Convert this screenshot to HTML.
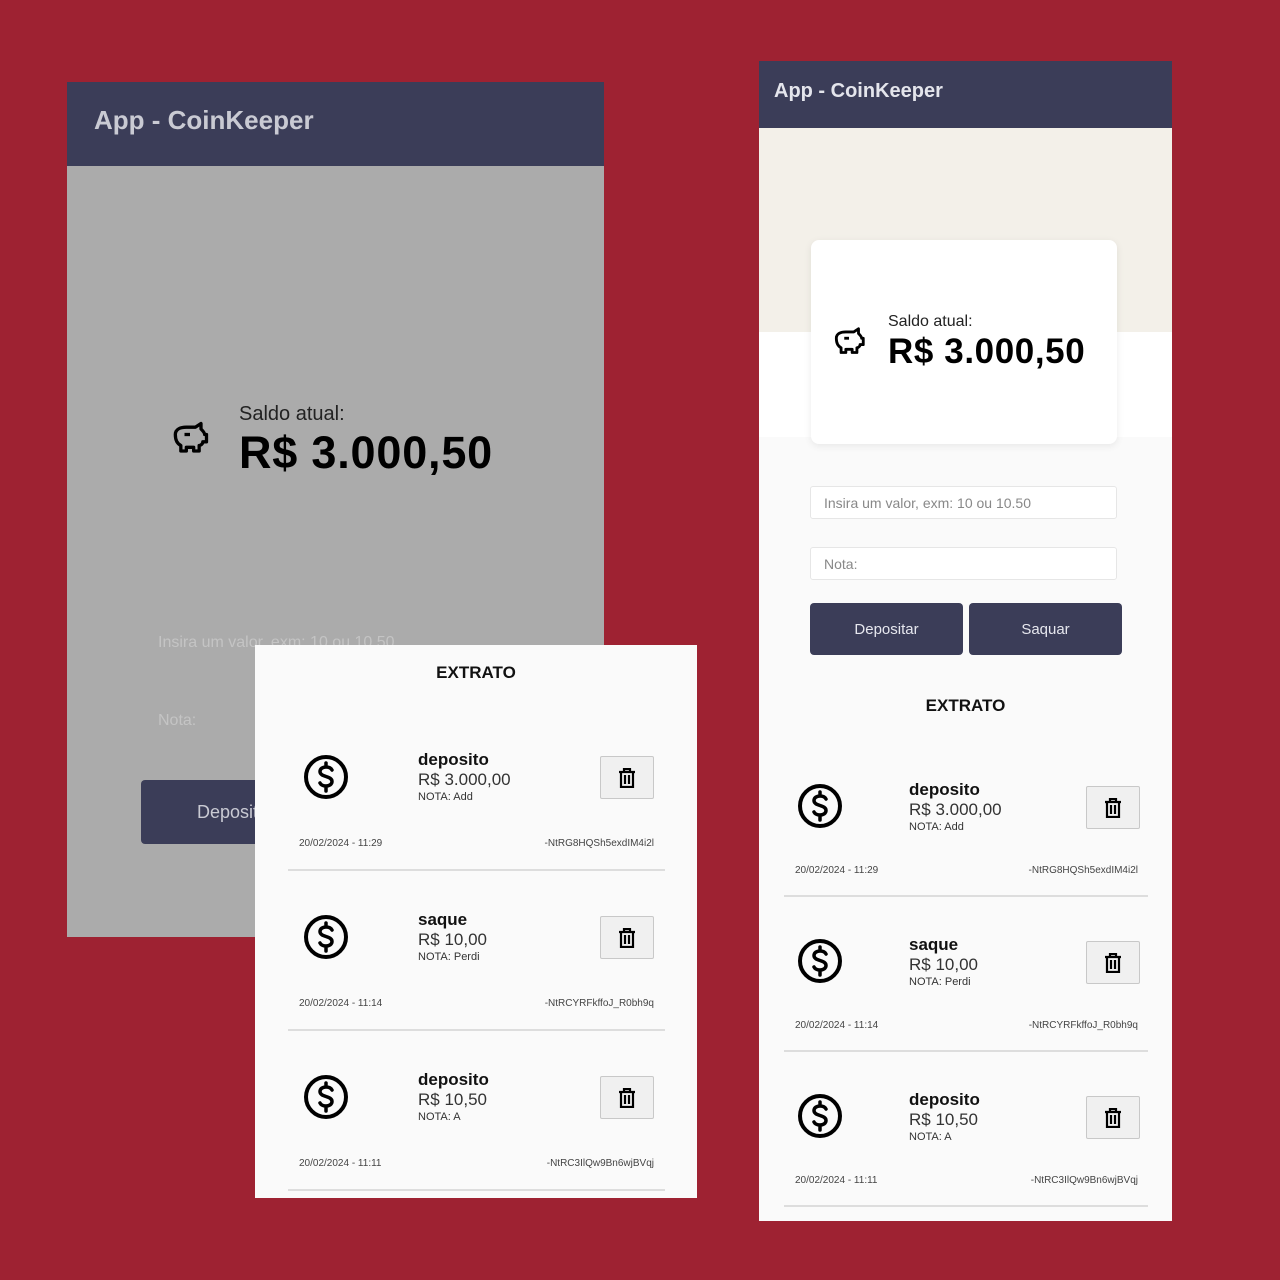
<!DOCTYPE html><html><head><meta charset="utf-8"><style>
*{margin:0;padding:0;box-sizing:border-box}
body{width:1280px;height:1280px;background:#9e2232;position:relative;overflow:hidden;font-family:"Liberation Sans",sans-serif;color:#111}
.a{position:absolute}
.hdr{background:#3b3d58;color:#e4e5ec;font-weight:bold}
.btn{background:#3b3d58;color:#e6e7ee;border-radius:4px;display:flex;align-items:center;justify-content:center;font-size:15px}
.inp{background:#fff;border:1px solid #e6e6e6;border-radius:3px;color:#888;font-size:14px;padding-left:13px;display:flex;align-items:center}
.tr{position:absolute;width:54px;height:43px;background:#f0f0f0;border:1px solid #c8c8c8;border-radius:2px;display:flex;align-items:center;justify-content:center}
.t1{font-weight:bold;font-size:17px;line-height:20px}
.t2{font-size:17px;line-height:20px;color:#333}
.t3{font-size:11px;color:#333;line-height:14px}
.sm{font-size:10px;color:#444}
.hr{position:absolute;height:2px;background:#ddd}
</style></head><body>
<div class="a" style="left:67px;top:82px;width:537px;height:855px;background:#ababab"></div>
<div class="a hdr" style="left:67px;top:82px;width:537px;height:84px;font-size:26px;padding:23px 0 0 27px;color:#c9cad3">App - CoinKeeper</div>
<svg class="a" style="left:168px;top:418px" width="44" height="44" viewBox="0 0 24 24" fill="none" stroke="#000" stroke-width="1.8" stroke-linejoin="round"><path d="M4 9c0-3 3-4 6-4h5l3-2v3c1 1 2 2 2 3h1v4h-2c0 1-1 2-2 2v3h-3v-2h-4v2H7v-3c-2-1-3-3-3-6z"/><path d="M9 9h3"/></svg>
<div class="a" style="left:239px;top:403px;font-size:20px;color:#222">Saldo atual:</div>
<div class="a" style="left:239px;top:427px;font-size:45px;font-weight:bold;color:#000;letter-spacing:0.8px">R$ 3.000,50</div>
<div class="a" style="left:158px;top:634px;font-size:16px;color:#c4c4c4">Insira um valor, exm: 10 ou 10.50</div>
<div class="a" style="left:158px;top:712px;font-size:16px;color:#c4c4c4">Nota:</div>
<div class="a btn" style="left:141px;top:780px;width:300px;height:64px;justify-content:flex-start;padding-left:56px;font-size:18px;color:#c9cad3">Depositar</div>
<div class="a" style="left:255px;top:645px;width:442px;height:553px;background:#fafafa"></div>
<div class="a" style="left:255px;top:663px;width:442px;text-align:center;font-weight:bold;font-size:17px">EXTRATO</div>
<div class="a" style="left:759px;top:61px;width:413px;height:1160px;background:#fafafa"></div>
<div class="a" style="left:759px;top:128px;width:413px;height:204px;background:#f3f0e9"></div>
<div class="a" style="left:759px;top:332px;width:413px;height:105px;background:#fff"></div>
<div class="a hdr" style="left:759px;top:61px;width:413px;height:67px;font-size:20px;padding:19px 0 0 15px">App - CoinKeeper</div>
<div class="a" style="left:811px;top:240px;width:306px;height:204px;background:#fff;border-radius:8px;box-shadow:0 2px 8px rgba(0,0,0,.08)"></div>
<svg class="a" style="left:830px;top:324px" width="38" height="38" viewBox="0 0 24 24" fill="none" stroke="#000" stroke-width="1.8" stroke-linejoin="round"><path d="M4 9c0-3 3-4 6-4h5l3-2v3c1 1 2 2 2 3h1v4h-2c0 1-1 2-2 2v3h-3v-2h-4v2H7v-3c-2-1-3-3-3-6z"/><path d="M9 9h3"/></svg>
<div class="a" style="left:888px;top:313px;font-size:16px;color:#222">Saldo atual:</div>
<div class="a" style="left:888px;top:332px;font-size:35px;font-weight:bold;color:#000;letter-spacing:0.6px">R$ 3.000,50</div>
<div class="a inp" style="left:810px;top:486px;width:307px;height:33px">Insira um valor, exm: 10 ou 10.50</div>
<div class="a inp" style="left:810px;top:547px;width:307px;height:33px">Nota:</div>
<div class="a btn" style="left:810px;top:603px;width:153px;height:52px">Depositar</div>
<div class="a btn" style="left:969px;top:603px;width:153px;height:52px">Saquar</div>
<div class="a" style="left:759px;top:696px;width:413px;text-align:center;font-weight:bold;font-size:17px">EXTRATO</div>
<div id="items"></div>
<script>
var data=[["deposito","R$ 3.000,00","NOTA: Add","20/02/2024 - 11:29","-NtRG8HQSh5exdIM4i2l"],["saque","R$ 10,00","NOTA: Perdi","20/02/2024 - 11:14","-NtRCYRFkffoJ_R0bh9q"],["deposito","R$ 10,50","NOTA: A","20/02/2024 - 11:11","-NtRC3IlQw9Bn6wjBVqj"]];
var coin='<svg width="48" height="48" viewBox="0 0 48 48" fill="none" stroke="#000" stroke-width="4"><circle cx="24" cy="24" r="20"/><path d="M30 17c-1-2-3-3-6-3s-6 1.5-6 4.5 3 4 6 5 6 2 6 5-3 4.5-6 4.5-5-1-6-3M24 10v4M24 34v4" stroke-width="3.5" stroke-linecap="round"/></svg>';
var trash='<svg width="18" height="20" viewBox="0 0 18 20" fill="none" stroke="#000" stroke-width="2.2"><path d="M1 4h16M6 4V1h6v3M3 4v15h12V4M7 7v9M11 7v9"/></svg>';
var h='';
function put(ix,iy,tx,ty,bx,by,dx,dy,rx,hx,hy,hw,sp){
 data.forEach(function(d,i){var o=i*sp;
 h+='<div class="a" style="left:'+(ix-24)+'px;top:'+(iy-24+o)+'px">'+coin+'</div>';
 h+='<div class="a" style="left:'+tx+'px;top:'+(ty+o)+'px"><div class="t1">'+d[0]+'</div><div class="t2">'+d[1]+'</div><div class="t3">'+d[2]+'</div></div>';
 h+='<div class="tr" style="left:'+bx+'px;top:'+(by+o)+'px">'+trash+'</div>';
 h+='<div class="a sm" style="left:'+dx+'px;top:'+(dy+o)+'px">'+d[3]+'</div>';
 h+='<div class="a sm" style="left:'+(rx-200)+'px;width:200px;text-align:right;top:'+(dy+o)+'px">'+d[4]+'</div>';
 h+='<div class="hr" style="left:'+hx+'px;top:'+(hy+o)+'px;width:'+hw+'px"></div>';});
}
put(326,777,418,750,600,756,299,838,654,288,869,377,160);
put(820,806,909,780,1086,786,795,865,1138,784,895,364,155);
document.getElementById('items').innerHTML=h;
</script>
</body></html>
